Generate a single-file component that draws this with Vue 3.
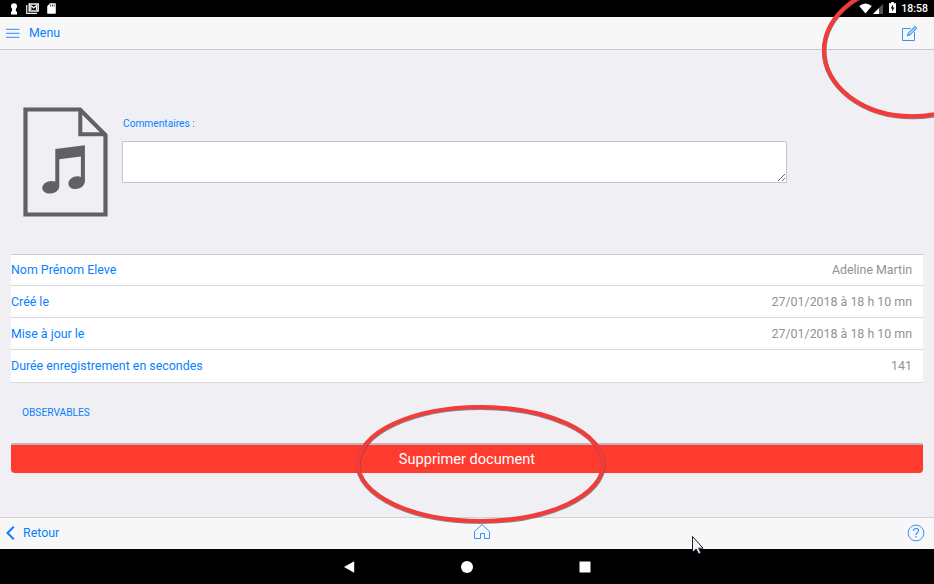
<script setup>
const rows = [
  { label: 'Nom Prénom Eleve', value: 'Adeline Martin' },
  { label: 'Créé le', value: '27/01/2018 à 18 h 10 mn' },
  { label: 'Mise à jour le', value: '27/01/2018 à 18 h 10 mn' },
  { label: 'Durée enregistrement en secondes', value: '141' },
]
</script>

<template>
  <div class="screen">
    <header class="status">
      <div class="status-left">
        <svg width="8" height="12" viewBox="0 0 8 12" fill="#fff"><circle cx="4" cy="3.2" r="3" /><path d="M2.300 5h3.400l.3 3.500h1V11.500H1V8.500h1z" /></svg>
        <svg class="mail" width="13" height="11" viewBox="0 0 13 11" fill="none" stroke="#eee"><path d="M.7 2v8.300H11" stroke-width="1.200" /><path d="M3.200 1h9v7h-9z" stroke-width="1.500" /><path d="M4.800 7V2.500l2.900 2.300 2.900-2.300V7" stroke-width="1.300" /></svg>
        <svg width="9" height="11" viewBox="0 0 9 11"><path d="M3 .3h5.200q.6 0 .6.700v9q0 .7-.6.700H.9q-.7 0-.7-.7V3.200z" fill="#fff" /><path d="M3.600 1.500v2M5.400 1.500v2M7.200 1.500v2" stroke="#222" stroke-width=".8" /></svg>
      </div>
      <div class="status-right">
        <svg width="13" height="11" viewBox="0 0 13 11"><path d="M.2 3Q6.500-2 12.800 3L6.500 10.600z" fill="#fff" /></svg>
        <svg class="signal" width="10" height="10" viewBox="0 0 10 10"><path d="M10 0v10H0z" fill="#555" /><path d="M6 4v6H0z" fill="#fff" /></svg>
        <svg class="battery" width="7" height="11" viewBox="0 0 7 11"><path d="M2.200 0h2.600v1.200H7V11H0V1.200h2.200z" fill="#fff" /><path d="M4 2.500 1.600 6.500h1.500v3l2.400-4H4z" fill="#111" /></svg>
        <span class="clock">18:58</span>
      </div>
    </header>

    <nav class="navbar">
      <a class="menu">
        <svg width="14" height="10" viewBox="0 0 14 10" stroke="#55a4fc" stroke-width="1.150"><path d="M0 1.400h13.500M0 5.400h13.500M0 9.300h13.500" /></svg>
        <span>Menu</span>
      </a>
      <svg class="edit" width="17" height="17" viewBox="0 0 17 17" fill="none" stroke="#3592fb"><path d="M9.500 3.500h-8v12h12V7" /><path d="m6.300 10.800.9-2.800L14 1.300l1.900 1.800L9 10z" fill="#a9d0fb" /><path d="m12.300 3 1.800 1.800M7.200 8 9 10" stroke-width=".7" /></svg>
    </nav>

    <main class="content">
      <section class="document">
        <svg class="file" width="86" height="111" viewBox="0 0 86 111">
          <path d="M2.500 2.500H57L82.500 28v79.500h-80z" fill="none" stroke="#616163" stroke-width="4.200" />
          <path d="M57.300 2v25.300H83" fill="none" stroke="#616163" stroke-width="4" />
          <path d="M32.300 42 61.900 38.200V74c0 5-5 8-9.500 8-4 0-7-2-7-5.500 0-5 7-9 12.500-6.500V49.500L36.300 52.200V79c0 5-5 7.500-9.500 7.500-4 0-7.500-2-7.500-5.500 0-5 7-8.500 13-6.500V42z" fill="#616163" />
        </svg>
        <div class="comments">
          <label for="comment">Commentaires :</label>
          <textarea id="comment"></textarea>
        </div>
      </section>

      <ul class="list">
        <li v-for="row in rows" :key="row.label">
          <span>{{ row.label }}</span>
          <span class="value">{{ row.value }}</span>
        </li>
      </ul>

      <h2>OBSERVABLES</h2>
      <button class="delete">Supprimer document</button>
    </main>

    <footer class="toolbar">
      <a class="back">
        <svg width="9" height="14" viewBox="0 0 9 14" fill="none" stroke="#0a80ff" stroke-width="2"><path d="M7.800.8 1.500 7l6.300 6.200" /></svg>
        <span>Retour</span>
      </a>
      <svg class="home" width="18" height="17" viewBox="0 0 18 17" fill="none" stroke="#3592fb"><path d="M1.500 15.500v-7L9 1.500l7.500 7v7h-5v-5h-4v5z" /></svg>
      <svg class="help" width="18" height="18" viewBox="0 0 18 18" fill="none" stroke="#3592fb"><circle cx="9" cy="9" r="7.900" /><path d="M6.500 7c0-3.300 5.100-3.300 5.100-.4 0 2-2.500 2-2.500 4.300" stroke-width="1.200" /><path d="M9.100 12v1.500" stroke-width="1.300" /></svg>
    </footer>

    <footer class="system">
      <svg width="11" height="12" viewBox="0 0 11 12" fill="#fff"><path d="M10.200.2v11.600L-.2 6z" /></svg>
      <svg width="12" height="12" viewBox="0 0 12 12" fill="#fff"><circle cx="6" cy="6" r="6" /></svg>
      <svg width="12" height="12" viewBox="0 0 12 12" fill="#fff"><path d="M.5.500h11v11H.5z" /></svg>
    </footer>

    <svg class="marks" width="934" height="584" viewBox="0 0 934 584" fill="none">
      <g stroke="#4b3c42" stroke-opacity=".6" stroke-width="4.600">
        <ellipse cx="912.200" cy="51" rx="88" ry="66" />
        <ellipse cx="480.800" cy="464.800" rx="122.600" ry="57" />
      </g>
      <g stroke="#f23c3c" stroke-width="4.200">
        <ellipse cx="912" cy="50.300" rx="88" ry="66" />
        <ellipse cx="480.600" cy="464" rx="122.600" ry="57" />
      </g>
      <path d="M692.500 536.500v15.800l3.600-3.300 2.600 5 2.200-1-2.300-4.800h4.500z" fill="#f4f4f8" stroke="#1b1b2b" />
    </svg>
  </div>
</template>

<style>
body {
  margin: 0;
}
</style>

<style scoped>
.screen {
  position: relative;
  display: flex;
  flex-direction: column;
  width: 934px;
  height: 584px;
  overflow: hidden;
  box-sizing: border-box;
  background: #efeff4;
  color: #087fff;
  font: 12.400px/16px Roboto, sans-serif;
}
.screen svg {
  display: block;
  flex: none;
}
.status {
  display: flex;
  justify-content: space-between;
  height: 17px;
  padding: 0 6px 0 10px;
  background: #000;
}
.status-left,
.status-right {
  display: flex;
  align-items: center;
}
.status-left {
  gap: 8px;
}
.signal {
  margin-left: 1px;
}
.battery {
  margin: 0 5px 2px 6px;
}
.clock {
  color: #fff;
  font-size: 10.500px;
  font-weight: 500;
  line-height: 17px;
}
.navbar {
  display: flex;
  align-items: center;
  justify-content: space-between;
  box-sizing: border-box;
  height: 33px;
  padding: 0 16px 0 6px;
  background: #f7f7f8;
  border-bottom: 1px solid #c8c8cb;
}
.menu,
.back {
  display: flex;
  align-items: center;
}
.menu {
  gap: 9px;
}
.content {
  flex: 1;
  padding: 0 11px;
}
.document {
  display: flex;
  padding: 57px 0 0 11.500px;
  height: 147px;
}
.comments {
  margin-left: 13.500px;
  padding-top: 10px;
}
.comments label {
  display: block;
  padding-left: 1px;
  font-size: 10.200px;
  line-height: 14px;
}
.comments textarea {
  display: block;
  box-sizing: border-box;
  width: 665px;
  height: 42px;
  margin: 10px 0 0;
  border: 1px solid #c5c5c8;
  border-radius: 1px;
  background: #fff;
  resize: vertical;
}
.list {
  margin: 0;
  padding: 0;
  list-style: none;
  background: #fff;
  border-top: 1px solid #c8c8cc;
}
.list li {
  display: flex;
  justify-content: space-between;
  box-sizing: border-box;
  height: 32px;
  padding: 8px 11px 0 0;
  border-bottom: 1px solid #d9d9dc;
}
.list li:first-child {
  height: 31px;
  padding-top: 7px;
}
.list li:last-child {
  height: 33px;
}
.value {
  color: #929295;
}
h2 {
  margin: 22px 0 0;
  padding: 0 11px;
  height: 38px;
  font-size: 10.200px;
  font-weight: 400;
  line-height: 16px;
}
.delete {
  display: block;
  width: 100%;
  height: 30px;
  padding: 0;
  border: 0;
  border-top: 2px solid #c3b2b6;
  border-radius: 2px 2px 4px 4px;
  background: #ff3b30;
  color: #fff;
  font: 14.600px/28px Roboto, sans-serif;
}
.toolbar {
  display: flex;
  align-items: center;
  justify-content: space-between;
  box-sizing: border-box;
  height: 32px;
  padding: 0 9px 2px 6px;
  background: #f7f7f8;
  border-top: 1px solid #d3d3d6;
}
.back {
  gap: 8px;
  width: 80px;
}
.home {
  margin: 0 auto 2px 387px;
}
.system {
  display: flex;
  align-items: center;
  justify-content: center;
  gap: 106px;
  height: 35px;
  background: #000;
}
.marks {
  position: absolute;
  left: 0;
  top: 0;
  pointer-events: none;
}
</style>
